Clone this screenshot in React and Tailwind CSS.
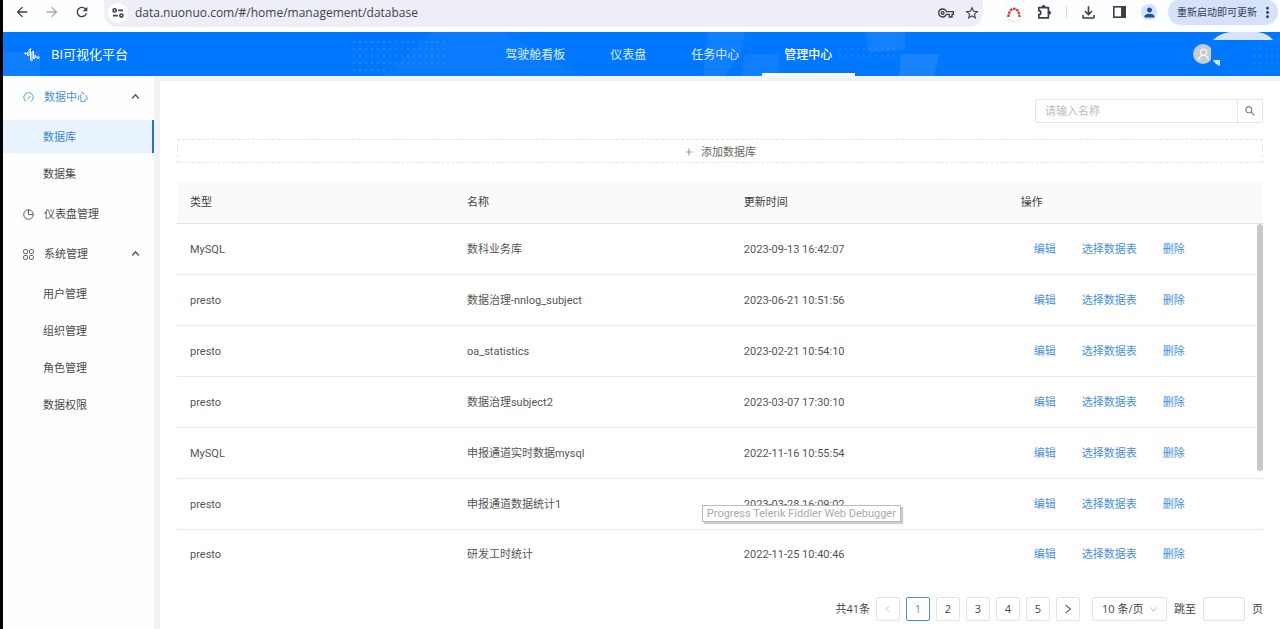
import React, { useState } from 'react'
import {
  MdArrowBack,
  MdArrowForward,
  MdRefresh,
  MdOutlineVpnKey,
  MdStarOutline,
  MdOutlineFileDownload,
  MdPerson,
  MdMoreVert,
} from 'react-icons/md'
import {
  AiOutlineDown,
  AiOutlineLeft,
  AiOutlineRight,
  AiOutlinePlus,
  AiOutlineSearch,
  AiOutlineUser,
} from 'react-icons/ai'

function GaugeIcon() {
  return (
    <svg className="mr-[10px]" width="11" height="11" viewBox="0 0 12 12" fill="none" stroke="currentColor">
      <path d="M3.200 10.400A5.200 5.200 0 1 1 8.800 10.400M5.500 7.300L8 4.600" strokeLinecap="round" />
    </svg>
  )
}

function PieIcon() {
  return (
    <svg className="mr-[10px]" width="11" height="11" viewBox="0 0 12 12" fill="none" stroke="currentColor">
      <circle cx="6" cy="6" r="5.200" />
      <path d="M6 1V6.200H11" />
    </svg>
  )
}

function GridIcon() {
  return (
    <svg className="mr-[10px]" width="11" height="11" viewBox="0 0 12 12" fill="none" stroke="currentColor">
      <rect x=".7" y=".7" width="4.200" height="4.200" rx="1" />
      <rect x="7.100" y=".7" width="4.200" height="4.200" rx="1" />
      <rect x=".7" y="7.100" width="4.200" height="4.200" rx="1" />
      <rect x="7.100" y="7.100" width="4.200" height="4.200" rx="1" />
    </svg>
  )
}

const navItems = ['驾驶舱看板', '仪表盘', '任务中心', '管理中心']

const menu = [
  { title: '数据中心', icon: GaugeIcon, active: true, children: ['数据库', '数据集'] },
  { title: '仪表盘管理', icon: PieIcon },
  { title: '系统管理', icon: GridIcon, children: ['用户管理', '组织管理', '角色管理', '数据权限'] },
]

const rows = [
  { type: 'MySQL', name: '数科业务库', time: '2023-09-13 16:42:07' },
  { type: 'presto', name: '数据治理-nnlog_subject', time: '2023-06-21 10:51:56' },
  { type: 'presto', name: 'oa_statistics', time: '2023-02-21 10:54:10' },
  { type: 'presto', name: '数据治理subject2', time: '2023-03-07 17:30:10' },
  { type: 'MySQL', name: '申报通道实时数据mysql', time: '2022-11-16 10:55:54' },
  { type: 'presto', name: '申报通道数据统计1', time: '2023-03-28 16:09:02', tip: 'Progress Telerik Fiddler Web Debugger' },
  { type: 'presto', name: '研发工时统计', time: '2022-11-25 10:40:46' },
]

function BrowserBar() {
  return (
    <div className="flex h-8 items-start bg-[#fdfeff] text-[#3c3f43]">
      <div className="flex h-6 w-[101px] shrink-0 items-center gap-[14px] pl-[11px]">
        <button aria-label="后退"><MdArrowBack size={16} /></button>
        <button aria-label="前进" className="text-[#a5a7aa]"><MdArrowForward size={16} /></button>
        <button aria-label="刷新"><MdRefresh size={16} /></button>
      </div>
      <div className="flex h-[27px] flex-1 items-center rounded-b-[14px] bg-[#edeef8] pr-[3px] pb-[2px] pl-1">
        <button aria-label="网站信息" className="flex size-5 items-center justify-center rounded-full bg-white">
          <svg width="12" height="10" viewBox="0 0 12 10" fill="none" stroke="currentColor" strokeWidth="1.6">
            <circle cx="2.6" cy="2.4" r="1.6" />
            <path d="M6.2 2.4H11M1 7.6H5.8" />
            <circle cx="9.4" cy="7.6" r="1.6" />
          </svg>
        </button>
        <input
          aria-label="地址"
          defaultValue="data.nuonuo.com/#/home/management/database"
          className="ml-[7px] min-w-0 flex-1 bg-transparent text-xs text-[#3f4247] outline-none"
        />
        <button aria-label="密码" className="mr-[10px]"><MdOutlineVpnKey size={16} /></button>
        <button aria-label="收藏"><MdStarOutline size={16} /></button>
      </div>
      <div className="flex h-6 items-center pl-[22px]">
        <button aria-label="扩展程序" className="flex size-[18px] items-center justify-center rounded-full bg-white shadow">
          <svg width="14" height="11" viewBox="0 0 14 11" fill="none" stroke="#c9434a" strokeWidth="2.400" strokeDasharray="2.600 .7">
            <path d="M1.4 10C1.8 4.5 4 1.8 7 1.8S12.2 4.500 12.600 10" />
          </svg>
        </button>
        <button aria-label="扩展" className="ml-[13px]">
          <svg width="17" height="17" viewBox="0 0 17 17">
            <path
              d="M2.800 3.600H12.400V13.800H2.800V10.700A2 2 0 0 0 2.800 6.700Z"
              fill="none"
              stroke="currentColor"
              strokeWidth="1.700"
              strokeLinejoin="round"
            />
            <path d="M5.600 3A2 2 0 0 1 9.600 3ZM13 6.700A2 2 0 0 1 13 10.700Z" fill="currentColor" />
          </svg>
        </button>
        <span className="ml-[13px] h-3 w-px bg-[#d5d8e4]" />
        <button aria-label="下载" className="ml-3"><MdOutlineFileDownload size={19} /></button>
        <button aria-label="侧边栏" className="ml-[15px]">
          <svg width="13" height="12" viewBox="0 0 13 12">
            <rect x=".8" y=".8" width="11.400" height="10.400" fill="none" stroke="currentColor" strokeWidth="1.600" />
            <path d="M8 1h4.500v10H8z" fill="currentColor" />
          </svg>
        </button>
        <button aria-label="个人资料" className="ml-[15px] flex size-4 items-center justify-center rounded-full bg-[#d3e3fd] text-[#174ea6]">
          <MdPerson size={15} />
        </button>
        <button className="mr-[2px] ml-[11px] flex h-[26px] w-[110px] items-center justify-between rounded-full bg-[#d6e2fa] pr-[2px] pl-[9px] text-[10px] whitespace-nowrap text-[#333c50]">
          重新启动即可更新
          <MdMoreVert size={17} />
        </button>
      </div>
    </div>
  )
}

function HeaderPattern() {
  return (
    <svg className="absolute inset-0 size-full" aria-hidden="true">
      <defs>
        <pattern id="dots" width="6" height="7" patternUnits="userSpaceOnUse">
          <circle cx="3" cy="3" r="1" fill="#5cabff" fillOpacity=".5" />
        </pattern>
      </defs>
      <path d="M0 20H37V44H0z" fill="#fff" fillOpacity=".06" />
      <path d="M430 0H500L580 44H380z" fill="#fff" fillOpacity=".03" />
      <rect x="350" y="4" width="36" height="35" fill="url(#dots)" />
      <rect x="386" y="4" width="60" height="28" fill="url(#dots)" opacity=".7" />
      <rect x="834" y="14" width="60" height="14" fill="url(#dots)" opacity=".7" />
      <rect x="1248" y="4" width="29" height="35" fill="url(#dots)" opacity=".5" />
      <path d="M705 0H742L738 20 722 44H700z" fill="#fff" fillOpacity=".06" />
      <path d="M742 22H776V44H738z" fill="#fff" fillOpacity=".06" />
      <path d="M862 0H902V18L866 20z" fill="#fff" fillOpacity=".07" />
      <path d="M898 22H936L931 44H896z" fill="#fff" fillOpacity=".1" />
    </svg>
  )
}

function Header({ current, onChange }) {
  return (
    <header className="relative flex h-11 bg-[#0077ff] text-white">
      <HeaderPattern />
      <div className="relative flex w-[37.6%] items-center pt-[2px] pl-[21px] text-[13px]">
        <svg className="mr-[11px]" width="16" height="16" viewBox="0 0 16 16" fill="none" stroke="currentColor" strokeLinejoin="round">
          <path d="M1 6.500H2.500L3.500 5V8.500H5V3L6.500 1.500V13L8 14V5L9.500 4V11.500H11V8L12.500 10.500H13.500" />
          <circle cx="14.300" cy="10.500" r="1" />
          <circle cx="1.300" cy="6.500" r=".7" fill="currentColor" />
        </svg>
        BI可视化平台
      </div>
      <nav className="relative flex text-xs">
        {navItems.map((item) => (
          <a
            key={item}
            href="#"
            onClick={() => onChange(item)}
            className={`flex items-center border-b-[3px] pt-[5px] pr-[23px] pl-[22px] ${
              item === current ? 'border-white font-medium text-white' : 'border-transparent text-[#d9ecff]'
            }`}
          >
            {item}
          </a>
        ))}
      </nav>
      <div className="relative ml-auto flex w-[87px] items-center">
        <span className="flex size-5 items-center justify-center rounded-full bg-[#c6cad2]">
          <AiOutlineUser size={15} />
        </span>
        <svg className="absolute inset-0" width="87" height="44" aria-hidden="true">
          <path d="M20 8C27 1 35 0 40 0H62C69 0 76 3 80 8z" fill="#d6e4fb" />
          <path d="M18 10H30V28H18z" fill="#0077ff" />
          <path d="M20 28H27V34C24 33 21 31 20 28z" fill="#d6e4fb" />
        </svg>
      </div>
    </header>
  )
}

function Sidebar({ selected, onSelect }) {
  return (
    <aside className="flex w-[151px] shrink-0 flex-col gap-[7px] bg-[#fefeff] pt-1 text-[11px] text-[#4a4a4a]">
      {menu.map(({ title, icon: Icon, active, children }) => (
        <div key={title} className="flex flex-col gap-[7px]">
          <button className={`flex h-[33px] items-center pt-[2px] pr-3 pl-5 ${active ? 'text-[#4a8fd6]' : ''}`}>
            <Icon />
            {title}
            {children && (
              <svg className="mr-[2px] mb-[2px] ml-auto" width="9" height="9" viewBox="0 0 9 9" fill="none" stroke="#555" strokeWidth="1.300">
                <path d="M1.200 6.500L4.500 2.800L7.800 6.500" />
              </svg>
            )}
          </button>
          {children && (
            <ul className="flex flex-col gap-1">
              {children.map((child) => (
                <li key={child}>
                  <a
                    href="#"
                    onClick={() => onSelect(child)}
                    className={`flex h-[33px] items-center border-r-2 pt-[2px] pl-10 ${
                      child === selected ? 'border-[#2474c4] bg-[#e8f3fe] text-[#3c87d2]' : 'border-transparent'
                    }`}
                  >
                    {child}
                  </a>
                </li>
              ))}
            </ul>
          )}
        </div>
      ))}
    </aside>
  )
}

function DatabaseTable() {
  return (
    <div className="relative mt-[17px]">
      <table className="w-full table-fixed border-collapse text-left font-[Roboto,'Noto_Sans_CJK_SC',sans-serif] text-[11px] text-[#555]">
        <thead>
          <tr className="h-[43px] border-b border-[#e4e4e4] bg-[#fafafa] text-[#3d3d3d]">
            <th className="w-[25.5%] pt-[3px] pl-[13px] font-normal">类型</th>
            <th className="w-[25.5%] pt-[3px] pl-[13px] font-normal">名称</th>
            <th className="w-[25.5%] pt-[3px] pl-[13px] font-normal">更新时间</th>
            <th className="pt-[3px] pl-[13px] font-normal">操作</th>
          </tr>
        </thead>
        <tbody>
          {rows.map((row) => (
            <tr key={row.name} className="h-[51px] border-b border-[#ebebeb] last:h-12 last:border-b-0">
              <td className="pt-[3px] pl-[13px]">{row.type}</td>
              <td className="pt-[3px] pl-[13px]">{row.name}</td>
              <td className="relative pt-[3px] pl-[13px]">
                {row.time}
                {row.tip && (
                  <span
                    role="tooltip"
                    className="absolute top-[26px] -left-[29px] border border-[#bbb] bg-white px-1 text-[11px] leading-[15px] whitespace-nowrap text-[#aaa] shadow-[2px_2px_1px_#ccc]"
                  >
                    {row.tip}
                  </span>
                )}
              </td>
              <td className="pt-[3px] pl-[26px]">
                <div className="flex gap-[26px] text-[#4a90d9]">
                  <a href="#">编辑</a>
                  <a href="#">选择数据表</a>
                  <a href="#">删除</a>
                </div>
              </td>
            </tr>
          ))}
        </tbody>
      </table>
      <div className="absolute top-11 right-0 h-[247px] w-[6px] rounded-full bg-[#c8c8c8]" />
    </div>
  )
}

function Pagination() {
  const [page, setPage] = useState(1)

  return (
    <div className="mt-5 flex items-center justify-end text-[11px] text-[#444]">
      <span className="mr-[6px]">共41条</span>
      <div className="flex gap-[6px]">
        <button aria-label="上一页" disabled={page === 1} className="flex size-6 items-center justify-center rounded-xs border border-[#e2e2e2] text-[#ccc]">
          <AiOutlineLeft size={10} />
        </button>
        {[1, 2, 3, 4, 5].map((n) => (
          <button
            key={n}
            onClick={() => setPage(n)}
            className={`size-6 rounded-xs border ${
              n === page ? 'border-[#4a90d9] text-[#4a90d9]' : 'border-[#e2e2e2]'
            }`}
          >
            {n}
          </button>
        ))}
        <button aria-label="下一页" className="flex size-6 items-center justify-center rounded-xs border border-[#e2e2e2]">
          <AiOutlineRight size={12} />
        </button>
      </div>
      <div className="relative ml-3">
        <select aria-label="每页条数" className="h-6 w-[75px] appearance-none rounded-xs border border-[#e2e2e2] pl-[9px]">
          <option>10 条/页</option>
          <option>20 条/页</option>
        </select>
        <AiOutlineDown size={9} className="pointer-events-none absolute top-2 right-[9px] text-[#bbb]" />
      </div>
      <label className="ml-[7px] flex items-center gap-[7px]">
        跳至
        <input type="text" className="h-6 w-[42px] rounded-xs border border-[#e2e2e2] px-1 outline-none" />
        页
      </label>
    </div>
  )
}

export default function App() {
  const [current, setCurrent] = useState('管理中心')
  const [selected, setSelected] = useState('数据库')

  return (
    <div className="flex min-h-screen flex-col border-l-[3px] border-black bg-white font-['Open_Sans','Noto_Sans_CJK_SC',sans-serif]">
      <BrowserBar />
      <Header current={current} onChange={setCurrent} />
      <div className="flex flex-1 bg-[#f1f2f5]">
        <Sidebar selected={selected} onSelect={setSelected} />
        <main className="mt-[5px] ml-[6px] min-w-0 flex-1 bg-white pt-[18px] pr-[17px] pb-2 pl-[17px] shadow-[0_0_3px_#f1f2f5]">
          <div className="ml-auto flex h-6 w-[228px] rounded-xs border border-[#e4e4ea] text-[11px]">
            <input aria-label="名称" placeholder="请输入名称" className="min-w-0 flex-1 px-[9px] outline-none placeholder:text-[#bbb]" />
            <button aria-label="搜索" className="flex w-[25px] items-center justify-center border-l border-[#e4e4ea] text-[#555]">
              <AiOutlineSearch size={12} />
            </button>
          </div>
          <button className="mt-4 flex h-6 w-full items-center justify-center gap-[7px] border border-dashed border-[#e6e6e6] pt-[2px] text-[11px] text-[#666]">
            <AiOutlinePlus size={10} />
            添加数据库
          </button>
          <DatabaseTable />
          <Pagination />
        </main>
      </div>
    </div>
  )
}
